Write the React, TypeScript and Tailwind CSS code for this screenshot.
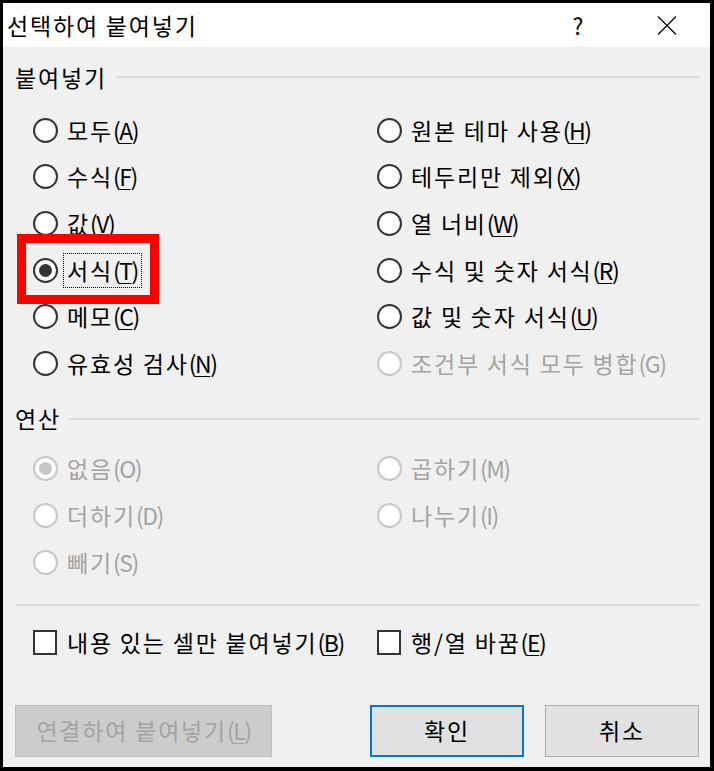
import React from 'react';
import { clsx } from 'clsx';

type Opt = { text: string; k: string; checked?: boolean; disabled?: boolean; focus?: boolean };

const pasteLeft: Opt[] = [
  { text: '모두', k: 'A' },
  { text: '수식', k: 'F' },
  { text: '값', k: 'V' },
  { text: '서식', k: 'T', checked: true, focus: true },
  { text: '메모', k: 'C' },
  { text: '유효성 검사', k: 'N' }
];
const pasteRight: Opt[] = [
  { text: '원본 테마 사용', k: 'H' },
  { text: '테두리만 제외', k: 'X' },
  { text: '열 너비', k: 'W' },
  { text: '수식 및 숫자 서식', k: 'R' },
  { text: '값 및 숫자 서식', k: 'U' },
  { text: '조건부 서식 모두 병합', k: 'G', disabled: true }
];
const opLeft: Opt[] = [
  { text: '없음', k: 'O', checked: true, disabled: true },
  { text: '더하기', k: 'D', disabled: true },
  { text: '빼기', k: 'S', disabled: true }
];
const opRight: Opt[] = [
  { text: '곱하기', k: 'M', disabled: true },
  { text: '나누기', k: 'I', disabled: true }
];

function Key({ k, under }: { k: string; under: boolean }) {
  return <span className="tracking-[-1.5px]">
      (<span className={clsx(under && 'underline decoration-1 underline-offset-[3px]')}>{k}</span>)
    </span>;
}

function Label({ text, k, disabled }: { text: string; k: string; disabled?: boolean }) {
  return <span className={clsx('whitespace-pre', disabled ? 'text-[#a3a3a3]' : 'text-black')}>
      {text}<Key k={k} under={!disabled} />
    </span>;
}

function Radio({ checked, disabled }: { checked?: boolean; disabled?: boolean }) {
  return <span className={clsx('w-[25px] h-[25px] rounded-full border-2 bg-white flex items-center justify-center shrink-0', disabled ? 'border-[#c6c6c6]' : 'border-[#333333]')}>
      {checked && <span className={clsx('w-[13px] h-[13px] rounded-full', disabled ? 'bg-[#c6c6c6]' : 'bg-[#333333]')} />}
    </span>;
}

function RadioItem({ opt, rowH }: { opt: Opt; rowH: string }) {
  return <div className={clsx('flex items-center gap-[9px]', rowH)}>
      <Radio checked={opt.checked} disabled={opt.disabled} />
      {opt.focus ? <span className="-ml-[4px] pl-[3px] pr-[3px] h-[35px] flex items-center border border-dotted border-black">
          <Label text={opt.text} k={opt.k} disabled={opt.disabled} />
        </span> : <Label text={opt.text} k={opt.k} disabled={opt.disabled} />}
    </div>;
}

function Section({ title, gap }: { title: string; gap: string }) {
  return <div className="flex items-center h-[36px]">
      <span>{title}</span>
      <div className={clsx('flex-1 h-[2px] bg-[#dcdcdc]', gap)} />
    </div>;
}

function Checkbox({ text, k }: { text: string; k: string }) {
  return <div className="flex items-center gap-[10px]">
      <span className="w-[24px] h-[25px] border-2 border-[#333333] bg-white shrink-0" />
      <Label text={text} k={k} />
    </div>;
}

export default function App() {
  return <div className="w-[714px] h-[771px] bg-black pt-[3px] pl-[3px] pr-[4px] pb-[4px] flex flex-col font-['Noto_Sans_CJK_KR','Noto_Sans',sans-serif] text-[23px] tracking-[1.8px] leading-none text-black">
      <div className="h-[44px] bg-white flex items-center pl-[4px] shrink-0">
        <span className="flex-1">선택하여 붙여넣기</span>
        <span className="w-[40px] flex justify-center tracking-normal">?</span>
        <span className="w-[40px] ml-[49px] mr-[23px] flex justify-center">
          <svg width="20" height="19" viewBox="0 0 20 19">
            <path d="M1 0.5 L19 18.5 M19 0.5 L1 18.5" stroke="#000" strokeWidth="1.2" fill="none" />
          </svg>
        </span>
      </div>

      <div className="flex-1 bg-[#f0f0f0] relative flex flex-col pl-[12px] pr-[10px]">
        <div className="mt-[12px]">
          <Section title="붙여넣기" gap="ml-[9px]" />
        </div>
        <div className="mt-[12px] pl-[18px] grid grid-cols-[344px_1fr]">
          <div className="flex flex-col">
            {pasteLeft.map(o => <RadioItem key={o.k} opt={o} rowH="h-[46.6px]" />)}
          </div>
          <div className="flex flex-col">
            {pasteRight.map(o => <RadioItem key={o.k} opt={o} rowH="h-[46.6px]" />)}
          </div>
        </div>

        <div className="mt-[14px]">
          <Section title="연산" gap="ml-[8px]" />
        </div>
        <div className="mt-[8.5px] pl-[18px] grid grid-cols-[344px_1fr]">
          <div className="flex flex-col">
            {opLeft.map(o => <RadioItem key={o.k} opt={o} rowH="h-[47px]" />)}
          </div>
          <div className="flex flex-col">
            {opRight.map(o => <RadioItem key={o.k} opt={o} rowH="h-[47px]" />)}
          </div>
        </div>

        <div className="mt-[17.5px] h-[2px] bg-[#dcdcdc]" />

        <div className="mt-[19px] h-[36px] pl-[18px] grid grid-cols-[344px_1fr] items-center">
          <Checkbox text="내용 있는 셀만 붙여넣기" k="B" />
          <Checkbox text="행/열 바꿈" k="E" />
        </div>

        <div className="mt-[44px] flex h-[52px]">
          <button className="w-[257px] h-full bg-[#cccccc] border border-[#bfbfbf] text-[#a3a3a3] flex items-center justify-center">
            연결하여 붙여넣기<Key k="L" under />
          </button>
          <button className="ml-[98px] w-[154px] h-full bg-[#e1e1e1] border-2 border-[#0078d7] flex items-center justify-center">
            확인
          </button>
          <button className="ml-[21px] w-[154px] h-full bg-[#e1e1e1] border border-[#adadad] flex items-center justify-center">
            취소
          </button>
        </div>

        <div className="absolute left-[14px] top-[187px] w-[142px] h-[70px] border-[9px] border-[#ff0000] pointer-events-none" />
      </div>
    </div>;
}
